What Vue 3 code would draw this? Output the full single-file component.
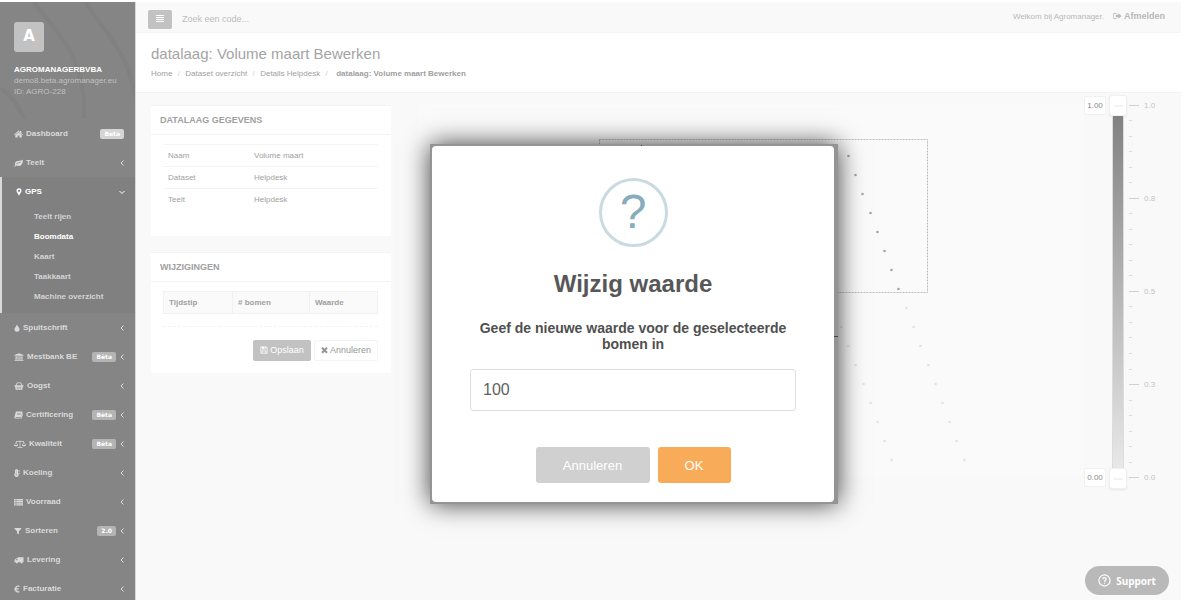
<script setup>
import { ref } from 'vue'

const icons = {
  home: { w: 9, d: 'M9 1 L12 4 V2 H14.500 V6 L18 9.300 L16.800 10.500 L9 3.700 L1.200 10.500 L0 9.300 Z M9 4.600 L15.500 10.300 V15 H10.800 V11 H7.200 V15 H2.500 V10.300 Z' },
  leaf: { w: 9, d: 'M17.500 1 C18.500 8 15 14 9 14 C7 14 5.500 13.500 4.200 13 L2 15.500 L0.300 14.300 L2.200 12 C0.500 4 7 3.500 12 3.300 C14.500 3.100 16 2.500 17.500 1 Z M5 10.500 C7 8.500 9.500 7.500 13 7.300 V6.300 C9 6.300 6.500 7.500 4.200 9.800 Z' },
  marker: { w: 6, d: 'M6 0.500 A5 5 0 0 1 11 5.500 C11 8.500 8 11 6 15.500 C4 11 1 8.500 1 5.500 A5 5 0 0 1 6 0.500 Z M6 3.300 A2.300 2.300 0 1 0 6 7.900 A2.300 2.300 0 1 0 6 3.300 Z' },
  tint: { w: 6, d: 'M6 1 C7 5 11 7 11 10.500 A5 5 0 0 1 1 10.500 C1 7 5 5 6 1 Z M3.500 10 A2 2 0 0 0 5.500 12.300 A2 2 0 0 1 3.500 10 Z' },
  bank: { w: 10, d: 'M10 0.500 L19 4 V5.500 H1 V4 Z M3 6.500 H5.500 V12 H7 V6.500 H9.200 V12 H10.800 V6.500 H13 V12 H14.500 V6.500 H17 V12 H18 V13.200 H2 V12 H3 Z M1 14 H19 V15.500 H1 Z' },
  basket: { w: 10, d: 'M1 6.500 H3 L6 1 H14 L17 6.500 H19 V8.500 H18 L16.500 15.500 H3.500 L2 8.500 H1 Z M7 2.500 L5 6.500 H15 L13 2.500 Z M5.500 9.500 L6 13.500 H7.200 L6.900 9.500 Z M9.300 9.500 V13.500 H10.700 V9.500 Z M13.100 9.500 L12.800 13.500 H14 L14.500 9.500 Z' },
  book: { w: 9, d: 'M5 1 H17 L14.500 12 H4 C2.500 12 2.500 13.500 4 13.500 H14.500 L17 4 L18 5 L15.500 15 H3 C1 15 0 13.500 1 11.500 L3.300 3 C3.600 1.800 4 1 5 1 Z M6.500 4 L6.200 5 H13.500 L13.800 4 Z M5.800 6.800 L5.500 7.800 H12.800 L13.100 6.800 Z' },
  scale: { w: 12, d: 'M11.300 0.500 H12.700 V2 H20 V3.300 L24 10.500 C23.500 13 16.500 13 16 10.500 L19.300 3.500 H12.700 V14 H17 V15.300 H7 V14 H11.300 V3.500 H4.700 L8 10.500 C7.500 13 0.500 13 0 10.500 L4 3.300 V2 H11.300 Z M4 5 L1.500 10 H6.500 Z M20 5 L17.500 10 H22.500 Z' },
  thermo: { w: 6, d: 'M2 3 A3 3 0 0 1 8 3 V8.500 A4.300 4.300 0 1 1 2 8.500 Z M4.500 3.500 V9.700 A2.300 2.300 0 0 0 5 13.500 V3.500 Z M9 2 H11.500 V3.500 H9 Z M9 5 H11.500 V6.500 H9 Z M9 8 H11.500 V9.500 H9 Z' },
  list: { w: 9, d: 'M0 2 H3.500 V4.500 H0 Z M4.500 2 H18 V4.500 H4.500 Z M0 5.500 H3.500 V8 H0 Z M4.500 5.500 H18 V8 H4.500 Z M0 9 H3.500 V11.500 H0 Z M4.500 9 H18 V11.500 H4.500 Z M0 12.500 H3.500 V15 H0 Z M4.500 12.500 H18 V15 H4.500 Z' },
  filter: { w: 8, d: 'M1 2 H14.500 V3.500 L9.700 8.500 V15 L6 12.500 V8.500 L1 3.500 Z' },
  truck: { w: 10, d: 'M7.500 2.500 H19 V12.500 H17.500 A2.200 2.200 0 0 1 13 12.500 H8 A2.200 2.200 0 0 1 3.500 12.500 H1 V8 L4 4.500 H7.500 Z M6.500 6 H4.800 L2.800 8.500 H6.500 Z' },
  euro: { w: 6, d: 'M11 1.500 L10.500 4 C7.500 2.800 5.500 4 5 6 H9.800 L9.400 7.500 H4.700 V8.800 H9 L8.600 10.300 H5 C5.600 12.500 8 13.300 10.800 12.200 V14.800 C6.500 16 2.800 14.300 2 10.300 H0.500 V8.800 H1.700 V7.500 H0.500 V6 H2 C3 1.800 6.500 0 11 1.500 Z' },
  signout: { w: 9, d: 'M7 2 V3.500 H3.500 C2.500 3.500 2 4 2 5 V11 C2 12 2.500 12.500 3.500 12.500 H7 V14 H3 C1.300 14 0.500 13 0.500 11.500 V4.500 C0.500 3 1.300 2 3 2 Z M11 2.500 L17 8 L11 13.500 V10.300 H5.500 V5.700 H11 Z' },
  save: { w: 8, d: 'M1 1 H12 L15 4 V15 H1 Z M2.500 2.500 V13.500 H3.500 V9 H12.500 V13.500 H13.500 V4.600 L11.400 2.500 V6.500 H4 V2.500 Z M8.200 2.500 V5.200 H10 V2.500 Z M4.800 10.300 V13.500 H11.200 V10.300 Z' },
  times: { w: 7, d: 'M3.300 2 L7 5.700 L10.700 2 L13.500 4.800 L9.800 8.500 L13.500 12.200 L10.700 15 L7 11.300 L3.300 15 L0.500 12.200 L4.200 8.500 L0.500 4.800 Z' }
}

const menu = [
  { label: 'Dashboard', icon: 'home', badge: 'Beta', leaf: true },
  { label: 'Teelt', icon: 'leaf' },
  { label: 'GPS', icon: 'marker', open: true, children: ['Teelt rijen', 'Boomdata', 'Kaart', 'Taakkaart', 'Machine overzicht'] },
  { label: 'Spuitschrift', icon: 'tint' },
  { label: 'Mestbank BE', icon: 'bank', badge: 'Bèta' },
  { label: 'Oogst', icon: 'basket' },
  { label: 'Certificering', icon: 'book', badge: 'Bèta' },
  { label: 'Kwaliteit', icon: 'scale', badge: 'Bèta' },
  { label: 'Koeling', icon: 'thermo' },
  { label: 'Voorraad', icon: 'list' },
  { label: 'Sorteren', icon: 'filter', badge: '2.0' },
  { label: 'Levering', icon: 'truck' },
  { label: 'Facturatie', icon: 'euro' }
]

const details = [
  ['Naam', 'Volume maart'],
  ['Dataset', 'Helpdesk'],
  ['Teelt', 'Helpdesk']
]

const selectedTrees = Array.from({ length: 8 }, (_, i) => [430 + Math.round(i * 7.2), 51 + i * 19])
const otherTrees = [
  ...Array.from({ length: 9 }, (_, i) => [488 + Math.round(i * 7.2), 203 + i * 19]),
  ...Array.from({ length: 8 }, (_, i) => [423 + Math.round(i * 7.2), 222 + i * 19])
]

const labels = ['1.0', '0.8', '0.5', '0.3', '0.0']
const ticks = Array.from({ length: 25 }, (_, i) => (i % 6 === 0 ? labels[i / 6] : ''))

const value = ref('100')
</script>

<template>
  <div class="shell">
    <aside class="sidebar">
      <div class="profile">
        <svg class="pattern" viewBox="0 0 135 117" preserveAspectRatio="none" aria-hidden="true">
          <path d="M34 0 C50 25 88 50 84 117 M86 0 C95 20 128 45 135 95 M0 86 C12 95 20 105 24 117" />
        </svg>
        <div class="logo">A</div>
        <strong>AGROMANAGERBVBA</strong>
        <span>demo8.beta.agromanager.eu</span>
        <span>ID: AGRO-228</span>
      </div>
      <nav>
        <div v-for="m in menu" :key="m.label" class="group" :class="{ open: m.open }">
          <a href="#" class="item">
            <svg class="icon" :viewBox="`0 0 ${icons[m.icon].w * 2} 16`" :width="icons[m.icon].w" height="8" aria-hidden="true">
              <path :d="icons[m.icon].d" fill-rule="evenodd" />
            </svg>
            <span class="label">{{ m.label }}</span>
            <span v-if="m.badge" class="badge" :class="{ bright: m.leaf }">{{ m.badge }}</span>
            <svg v-if="!m.leaf" class="chevron" viewBox="0 0 6 6" width="6" height="6" aria-hidden="true">
              <path :d="m.open ? 'M0.500 2 L3 4.500 L5.500 2' : 'M4.500 0.500 L2 3 L4.500 5.500'" />
            </svg>
          </a>
          <div v-if="m.children" class="subs">
            <a v-for="c in m.children" :key="c" href="#" :class="{ current: c === 'Boomdata' }">{{ c }}</a>
          </div>
        </div>
      </nav>
    </aside>

    <main class="main">
      <header class="topbar">
        <button type="button" class="burger" aria-label="Menu">
          <svg viewBox="0 0 8 8" width="8" height="8"><path d="M0 0 H8 V1 H0 Z M0 2 H8 V3 H0 Z M0 4 H8 V5 H0 Z M0 6 H8 V7 H0 Z" /></svg>
        </button>
        <input class="search" type="text" placeholder="Zoek een code..." aria-label="Zoek een code" />
        <span class="welcome">Welkom bij Agromanager.</span>
        <a href="#" class="logout">
          <svg class="icon" viewBox="0 0 18 16" width="9" height="8" aria-hidden="true"><path :d="icons.signout.d" fill-rule="evenodd" /></svg>
          Afmelden
        </a>
      </header>

      <section class="heading">
        <h1>datalaag: Volume maart Bewerken</h1>
        <div class="crumbs">
          <a href="#">Home</a><i>/</i><a href="#">Dataset overzicht</a><i>/</i><a href="#">Details Helpdesk</a><i>/</i><strong>datalaag: Volume maart Bewerken</strong>
        </div>
      </section>

      <div class="content">
        <div class="panels">
          <section class="panel">
            <h2>Datalaag gegevens</h2>
            <div class="body">
              <table class="details">
                <tbody>
                  <tr v-for="d in details" :key="d[0]"><td>{{ d[0] }}</td><td>{{ d[1] }}</td></tr>
                </tbody>
              </table>
            </div>
          </section>
          <section class="panel">
            <h2>Wijzigingen</h2>
            <div class="body changes">
              <table class="grid">
                <thead><tr><th>Tijdstip</th><th># bomen</th><th>Waarde</th></tr></thead>
              </table>
              <hr />
              <div class="actions">
                <button type="button" class="save">
                  <svg class="icon" viewBox="0 0 16 16" width="8" height="8" aria-hidden="true"><path :d="icons.save.d" fill-rule="evenodd" /></svg>
                  Opslaan
                </button>
                <button type="button" class="cancel">
                  <svg class="icon" viewBox="0 0 14 16" width="7" height="8" aria-hidden="true"><path :d="icons.times.d" /></svg>
                  Annuleren
                </button>
              </div>
            </div>
          </section>
        </div>

        <section class="map">
          <svg class="trees" width="640" height="372" viewBox="0 0 640 372" aria-hidden="true">
            <rect x="181.500" y="34.500" width="328" height="153" class="selection" />
            <circle v-for="(t, i) in selectedTrees" :key="'s' + i" :cx="t[0] + 0.5" :cy="t[1]" r="1.300" fill="#a6a6a6" />
            <circle v-for="(t, i) in otherTrees" :key="'o' + i" :cx="t[0] + 0.5" :cy="t[1]" r="1.300" fill="#e2e2e2" />
          </svg>
        </section>

        <section class="legend">
          <div class="values"><span>1.00</span><span>0.00</span></div>
          <div class="track">
            <button type="button" class="handle" aria-label="Maximum"></button>
            <div class="bar"></div>
            <button type="button" class="handle" aria-label="Minimum"></button>
          </div>
          <div class="scale">
            <div v-for="(t, i) in ticks" :key="i" class="tick" :class="{ major: t }"><i></i><span v-if="t">{{ t }}</span></div>
          </div>
        </section>
      </div>
    </main>

    <button type="button" class="support">
      <svg viewBox="0 0 14 14" width="13" height="13" aria-hidden="true">
        <circle cx="7" cy="7" r="6" />
        <path d="M5.200 5.700 C5.200 3.300 8.800 3.300 8.800 5.600 C8.800 6.900 7 6.900 7 8.300 M7 9.500 V10.600" />
      </svg>
      Support
    </button>

    <div class="overlay">
      <div class="frame" role="dialog" aria-labelledby="dialog-title">
        <i class="speck top"></i>
        <i class="speck side"></i>
        <form class="dialog" @submit.prevent>
          <div class="question">?</div>
          <h3 id="dialog-title">Wijzig waarde</h3>
          <label for="tree-value">Geef de nieuwe waarde voor de geselecteerde bomen in</label>
          <input id="tree-value" v-model="value" type="text" />
          <div class="choices">
            <button type="button" class="no">Annuleren</button>
            <button type="submit" class="yes">OK</button>
          </div>
        </form>
      </div>
    </div>
  </div>
</template>

<style>
body { background: #fff; }
</style>

<style scoped>
* { box-sizing: border-box; }
.shell {
  position: relative;
  display: flex;
  height: 100vh;
  padding: 2px 4px 2px 0;
  overflow: hidden;
  font: 8px/11px "Liberation Sans", Arial, sans-serif;
  color: #a0a0a0;
  background: #fff;
}
a { color: inherit; text-decoration: none; }
button, input { font: inherit; color: inherit; border: 0; padding: 0; margin: 0; }
h1, h2, h3 { margin: 0; }
.icon { fill: currentColor; flex: none; }

.sidebar { flex: none; width: 136px; background: #858585; color: #dadada; border-right: 1px solid #d8d8d8; overflow: hidden; }
.profile { position: relative; display: flex; flex-direction: column; height: 117px; padding: 20px 14px 0; color: #c0c0c0; }
.pattern { position: absolute; inset: 0; width: 100%; height: 100%; fill: none; stroke: #818181; stroke-width: 4; }
.profile > :not(.pattern) { position: relative; }
.profile strong { color: #fff; }
.profile span { white-space: nowrap; }
.logo { width: 30px; height: 30px; margin-bottom: 12px; border-radius: 3px; background: #c2c2c2; color: #fff; font: bold 15px/28px "DejaVu Sans", sans-serif; text-align: center; }
.item { display: flex; align-items: center; gap: 3px; height: 29px; padding: 0 10px 0 14px; font-weight: bold; }
.label { flex: 1; white-space: nowrap; }
.badge { padding: 0 4px; border-radius: 2px; background: #b4b4b4; color: #fff; font: bold 6px/10px "DejaVu Sans", sans-serif; }
.badge.bright { background: #d5d5d5; margin-right: 1px; }
.chevron { fill: none; stroke: currentColor; flex: none; }
.open { background: #808080; border-left: 2px solid #d9d9d9; color: #fff; }
.subs { display: flex; flex-direction: column; padding: 1px 0 6px 32px; color: #d4d4d4; }
.subs a { height: 20px; line-height: 20px; font-weight: bold; }
.subs .current { color: #fff; }

.main { flex: 1; min-width: 0; display: flex; flex-direction: column; background: #f9f9f9; }
.topbar { display: flex; align-items: center; height: 31px; padding: 4px 16px 0 12px; border-bottom: 1px solid #f4f4f4; }
.burger { display: flex; align-items: center; justify-content: center; width: 24px; height: 19px; border-radius: 2px; background: #c2c2c2; }
.burger svg { fill: #fff; }
.search { flex: 1; min-width: 0; margin-left: 10px; background: transparent; font-size: 9px; outline: 0; }
.search::placeholder { color: #bcbcbc; opacity: 1; }
.welcome, .logout { color: #b8b8b8; margin-bottom: 6px; }
.logout { display: flex; align-items: center; gap: 2px; margin-left: 9px; font-weight: bold; font-size: 9px; }
.heading { padding: 12px 15px 13px; background: #fff; border-bottom: 1px solid #f3f3f3; }
h1 { font-size: 15px; line-height: 17px; font-weight: normal; color: #a4a4a4; }
.crumbs { display: flex; padding-top: 6px; }
.crumbs i { width: 13px; text-align: center; font-style: normal; color: #cfcfcf; }
.crumbs strong { margin-left: 3px; }

.content { flex: 1; display: flex; min-height: 0; padding: 12px 0 0 15px; }
.panels { flex: none; width: 240px; display: flex; flex-direction: column; gap: 16px; }
.panel { background: #fff; border-top: 1px solid #f3f3f3; }
h2 { padding: 0 9px; border-bottom: 1px solid #f4f4f4; font-size: 9px; line-height: 28px; text-transform: uppercase; }
.body { padding: 9px 13px 25px 12px; }
.body.changes { padding-bottom: 12px; }
table { width: 100%; border-collapse: collapse; table-layout: fixed; }
td { height: 22px; padding: 0 5px; border-top: 1px solid #f4f4f4; }
td:first-child { width: 86px; }
th { height: 22px; padding: 0 5px; border: 1px solid #f1f1f1; background: #fafafa; text-align: left; }
th:first-child { width: 69px; }
th:nth-child(2) { width: 77px; }
hr { margin: 12px 0 13px; border: 0; border-top: 1px dashed #f3f3f3; }
.actions { display: flex; justify-content: flex-end; gap: 3px; }
.actions button { display: flex; align-items: center; justify-content: center; gap: 2px; height: 21px; border-radius: 2px; font-size: 9px; }
.actions .save { width: 58px; background: #c2c2c2; color: #fff; }
.actions .cancel { width: 64px; background: #fff; border: 1px solid #f4f4f4; color: #969696; }

.map { position: relative; flex: 1; min-width: 0; height: 372px; margin-left: 27px; background: #fafafa; overflow: hidden; }
.trees { position: absolute; left: 0; top: 0; }
.selection { fill: none; stroke: #bcbcbc; stroke-dasharray: 2 1; }

.legend { flex: none; display: flex; width: 97px; height: 394px; margin-top: -10px; }
.values { display: flex; flex-direction: column; justify-content: space-between; width: 22px; padding: 1px 0 2px; margin-right: 3px; }
.values span { height: 19px; border: 1px solid #f1f1f1; border-radius: 2px; background: #fff; color: #8a8a8a; line-height: 17px; text-align: center; }
.track { display: flex; flex-direction: column; align-items: center; width: 18px; }
.handle { flex: none; width: 18px; height: 21px; border: 1px solid #f1f1f1; border-radius: 3px; background: linear-gradient(#f3f3f3, #f3f3f3) center / 9px 2px no-repeat #fff; box-shadow: 0 1px 2px #e6e6e6; }
.bar { flex: 1; width: 12px; border: solid #dcdcdc; border-width: 0 1px; background: linear-gradient(#828282, #e8e8e8); }
.scale { display: flex; flex-direction: column; justify-content: space-between; padding: 5px 0 6px 2px; }
.tick { display: flex; align-items: center; height: 10px; color: #c4c4c4; }
.tick i { width: 3px; height: 1px; background: #dcdcdc; }
.major i { width: 10px; margin-right: 5px; background: #d0d0d0; }

.support { position: absolute; right: 16px; bottom: 7px; display: flex; align-items: center; justify-content: center; gap: 5px; width: 84px; height: 29px; border-radius: 15px; background: #b9b9b9; color: #fff; font: bold 10px/14px "Noto Sans", sans-serif; }
.support svg { fill: none; stroke: #fff; stroke-width: 1.3; }

.overlay { position: absolute; inset: 0; display: flex; align-items: center; justify-content: center; padding: 46px 0 0 83px; }
.frame { position: relative; width: 408px; padding: 2px 4px 2px 2px; background: #949494; box-shadow: 0 0 24px 0 rgba(0, 0, 0, 0.75); }
.speck { position: absolute; background: #444; }
.speck.top { left: 211px; top: 1px; width: 1px; height: 1px; }
.speck.side { right: 0; top: 192px; width: 4px; height: 1px; }
.dialog { display: flex; flex-direction: column; align-items: center; padding: 32px 38px 19px; border-radius: 4px; background: #fff; }
.question { width: 69px; height: 69px; border: 3px solid #c9dae1; border-radius: 50%; color: #87adbd; font-size: 48px; line-height: 62px; text-align: center; }
h3 { margin-top: 22px; font-size: 24px; line-height: 30px; color: #575757; }
.dialog label { margin: 21px 0 17px; font-size: 14px; line-height: 16px; font-weight: bold; color: #505050; text-align: center; }
.dialog input { width: 100%; height: 42px; padding: 0 12px; border: 1px solid #dedede; border-radius: 3px; font-size: 16px; color: #606060; outline: 0; }
.choices { display: flex; gap: 8px; margin-top: 36px; }
.choices button { height: 36px; border-radius: 3px; font-size: 13px; color: #fff; }
.choices .no { width: 114px; background: #d0d0d0; }
.choices .yes { width: 73px; background: #f8ac59; }
</style>
